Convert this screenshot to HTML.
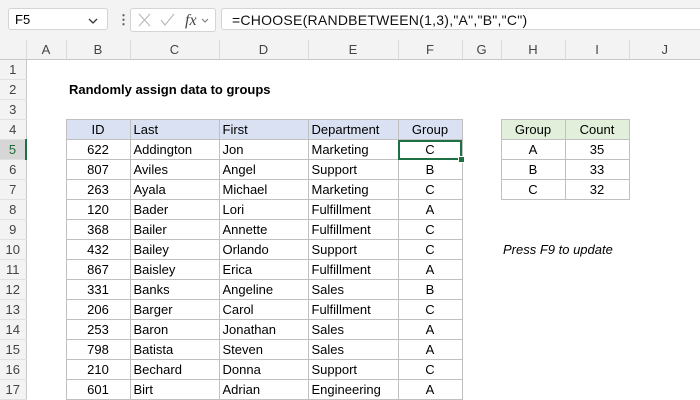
<!DOCTYPE html>
<html><head><style>
body{margin:0;width:700px;height:400px;overflow:hidden;background:#fff;font-family:"Liberation Sans",sans-serif;position:relative}
.top{position:absolute;left:0;top:0;width:700px;height:40px;background:#f3f3f3}
.box{position:absolute;background:#fff;border:1px solid #d4d4d4;border-radius:3px;height:22px;top:8px;font-size:13px;line-height:22px}
table{position:absolute;left:0;top:40px;border-collapse:collapse;table-layout:fixed}
td{height:19px;padding:0 3px;font-size:13px;color:#000;white-space:nowrap;overflow:hidden;border:0}
.ch td{background:#f3f3f3;color:#444;text-align:center;border-bottom:1px solid #c8c8c8;border-right:1px solid #dadada;height:19px}
td.rh{background:#f3f3f3;color:#444;text-align:center;border-right:1px solid #c8c8c8;border-bottom:1px solid #e0e0e0;padding:0}
td.b{border:1px solid #c0c0c0}
.c{text-align:center}
.hb{background:#d9e1f2}
.hg{background:#e2efda}
</style></head><body>
<div class="top">
<div class="box" style="left:8px;width:100px;padding-left:6px;box-sizing:border-box">F5<svg width="12" height="8" style="position:absolute;right:8px;top:8px"><path d="M2 2l4 4 4-4" stroke="#333" stroke-width="1.3" fill="none"/></svg></div>
<div style="position:absolute;left:117px;top:12px;color:#555;font-size:13px;font-weight:bold">&#8942;</div>
<div class="box" style="left:130px;width:84px;color:#bbb">
<svg width="84" height="22" style="position:absolute;left:0;top:0"><path d="M8 5l11 12M19 5L8 17" stroke="#bbb" stroke-width="1.2" fill="none"/><path d="M30 11l4 5 9-11" stroke="#bbb" stroke-width="1.2" fill="none"/><text x="54" y="16" font-family="Liberation Serif" font-style="italic" font-size="16" fill="#444">fx</text><path d="M71 10l3 3 3-3" stroke="#777" fill="none"/></svg></div>
<div class="box" style="left:221px;width:490px;padding-left:10px;box-sizing:border-box;font-size:14px;color:#111;letter-spacing:0.25px">=CHOOSE(RANDBETWEEN(1,3),"A","B","C")</div>
</div>
<table>
<colgroup><col style="width:26px"><col style="width:40px"><col style="width:64px"><col style="width:89px"><col style="width:89px"><col style="width:90px"><col style="width:64px"><col style="width:39px"><col style="width:64px"><col style="width:64px"><col style="width:71px"></colgroup>
<tr class="ch"><td style="background:#f3f3f3"></td><td>A</td><td>B</td><td>C</td><td>D</td><td>E</td><td>F</td><td>G</td><td>H</td><td>I</td><td style="border-right:0">J</td></tr>
<tr><td class="rh">1</td><td></td><td></td><td></td><td></td><td></td><td></td><td></td><td></td><td></td><td></td></tr>
<tr><td class="rh">2</td><td></td><td colspan="4" style="font-weight:bold">Randomly assign data to groups</td><td></td><td></td><td></td><td></td><td></td></tr>
<tr><td class="rh">3</td><td></td><td></td><td></td><td></td><td></td><td></td><td></td><td></td><td></td><td></td></tr>
<tr><td class="rh">4</td><td></td><td class="b hb c">ID</td><td class="b hb">Last</td><td class="b hb">First</td><td class="b hb">Department</td><td class="b hb c">Group</td><td></td><td class="b hg c">Group</td><td class="b hg c">Count</td><td></td></tr>
<tr><td class="rh" style="background:#d6d6d6;color:#1e6b3b;border-right:2px solid #1e7145">5</td><td></td><td class="b c">622</td><td class="b">Addington</td><td class="b">Jon</td><td class="b">Marketing</td><td class="b c" style="outline:2px solid #1e7145;outline-offset:-2px">C</td><td></td><td class="b c">A</td><td class="b c">35</td><td></td></tr>
<tr><td class="rh">6</td><td></td><td class="b c">807</td><td class="b">Aviles</td><td class="b">Angel</td><td class="b">Support</td><td class="b c">B</td><td></td><td class="b c">B</td><td class="b c">33</td><td></td></tr>
<tr><td class="rh">7</td><td></td><td class="b c">263</td><td class="b">Ayala</td><td class="b">Michael</td><td class="b">Marketing</td><td class="b c">C</td><td></td><td class="b c">C</td><td class="b c">32</td><td></td></tr>
<tr><td class="rh">8</td><td></td><td class="b c">120</td><td class="b">Bader</td><td class="b">Lori</td><td class="b">Fulfillment</td><td class="b c">A</td><td></td><td></td><td></td><td></td></tr>
<tr><td class="rh">9</td><td></td><td class="b c">368</td><td class="b">Bailer</td><td class="b">Annette</td><td class="b">Fulfillment</td><td class="b c">C</td><td></td><td></td><td></td><td></td></tr>
<tr><td class="rh">10</td><td></td><td class="b c">432</td><td class="b">Bailey</td><td class="b">Orlando</td><td class="b">Support</td><td class="b c">C</td><td></td><td colspan="3" style="font-style:italic;padding-left:2px">Press F9 to update</td></tr>
<tr><td class="rh">11</td><td></td><td class="b c">867</td><td class="b">Baisley</td><td class="b">Erica</td><td class="b">Fulfillment</td><td class="b c">A</td><td></td><td></td><td></td><td></td></tr>
<tr><td class="rh">12</td><td></td><td class="b c">331</td><td class="b">Banks</td><td class="b">Angeline</td><td class="b">Sales</td><td class="b c">B</td><td></td><td></td><td></td><td></td></tr>
<tr><td class="rh">13</td><td></td><td class="b c">206</td><td class="b">Barger</td><td class="b">Carol</td><td class="b">Fulfillment</td><td class="b c">C</td><td></td><td></td><td></td><td></td></tr>
<tr><td class="rh">14</td><td></td><td class="b c">253</td><td class="b">Baron</td><td class="b">Jonathan</td><td class="b">Sales</td><td class="b c">A</td><td></td><td></td><td></td><td></td></tr>
<tr><td class="rh">15</td><td></td><td class="b c">798</td><td class="b">Batista</td><td class="b">Steven</td><td class="b">Sales</td><td class="b c">A</td><td></td><td></td><td></td><td></td></tr>
<tr><td class="rh">16</td><td></td><td class="b c">210</td><td class="b">Bechard</td><td class="b">Donna</td><td class="b">Support</td><td class="b c">C</td><td></td><td></td><td></td><td></td></tr>
<tr><td class="rh">17</td><td></td><td class="b c">601</td><td class="b">Birt</td><td class="b">Adrian</td><td class="b">Engineering</td><td class="b c">A</td><td></td><td></td><td></td><td></td></tr>
</table>
<div style="position:absolute;left:458px;top:156px;width:5px;height:5px;background:#1e7145;border:1px solid #fff"></div>
</body></html>
